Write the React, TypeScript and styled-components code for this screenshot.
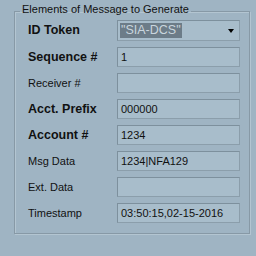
import styled, { createGlobalStyle } from "styled-components";

const GlobalStyle = createGlobalStyle`
  html, body {
    margin: 0;
    padding: 0;
    width: 256px;
    height: 256px;
    overflow: hidden;
    background: #9fb4c3;
    font-family: "Liberation Sans", Arial, sans-serif;
    color: #111;
  }
`;

const Page = styled.div`
  width: 256px;
  height: 256px;
  padding: 3px 0 0 14px;
  box-sizing: border-box;
`;

const Group = styled.fieldset`
  margin: 0;
  width: 236px;
  box-sizing: border-box;
  padding: 1px 8px 5px 13px;
  border: 1px solid #8799a6;
  box-shadow: inset 1px 1px 0 #b3c5d1, 1px 1px 0 #b3c5d1;
`;

const Legend = styled.legend`
  margin-left: -8px;
  padding: 0 2px 4px 2px;
  font-size: 11px;
  line-height: 12px;
  color: #111;
`;

const Row = styled.div<{ $combo?: boolean }>`
  display: grid;
  grid-template-columns: 89px 123px;
  height: 26px;
  box-sizing: border-box;
  padding-top: ${(p) => (p.$combo ? "0" : "1px")};
`;

const Label = styled.div<{ $bold?: boolean; $tall?: boolean }>`
  font-size: ${(p) => (p.$bold ? "12.5px" : "11px")};
  font-weight: ${(p) => (p.$bold ? "bold" : "normal")};
  line-height: ${(p) => (p.$tall ? "21px" : "20px")};
  white-space: nowrap;
`;

const Field = styled.div`
  height: 20px;
  box-sizing: border-box;
  background: #a8bdcb;
  border: 1px solid #8b9eab;
  border-top-color: #7d909d;
  border-left-color: #7d909d;
  padding-left: 3px;
  font-size: 11px;
  line-height: 18px;
  white-space: nowrap;
  overflow: hidden;
`;

const Combo = styled(Field)`
  height: 21px;
  display: flex;
  align-items: center;
  justify-content: space-between;
  padding: 0 5px 0 2px;
`;

const Selected = styled.span`
  background: #6c7c88;
  color: #c9d5dd;
  font-size: 12.5px;
  line-height: 15px;
  padding: 0 1px;
`;

const Arrow = styled.span`
  width: 0;
  height: 0;
  border-left: 3.5px solid transparent;
  border-right: 3.5px solid transparent;
  border-top: 4px solid #000;
  margin-top: 1px;
`;

const rows: { label: string; bold?: boolean; value: string }[] = [
  { label: "Sequence #", bold: true, value: "1" },
  { label: "Receiver #", value: "" },
  { label: "Acct. Prefix", bold: true, value: "000000" },
  { label: "Account #", bold: true, value: "1234" },
  { label: "Msg Data", value: "1234|NFA129" },
  { label: "Ext. Data", value: "" },
  { label: "Timestamp", value: "03:50:15,02-15-2016" },
];

export default function App() {
  return (
    <Page>
      <GlobalStyle />
      <Group>
        <Legend>Elements of Message to Generate</Legend>
        <Row $combo>
          <Label $bold $tall>ID Token</Label>
          <Combo>
            <Selected>"SIA-DCS"</Selected>
            <Arrow />
          </Combo>
        </Row>
        {rows.map((r) => (
          <Row key={r.label}>
            <Label $bold={r.bold}>{r.label}</Label>
            <Field>{r.value}</Field>
          </Row>
        ))}
      </Group>
    </Page>
  );
}
